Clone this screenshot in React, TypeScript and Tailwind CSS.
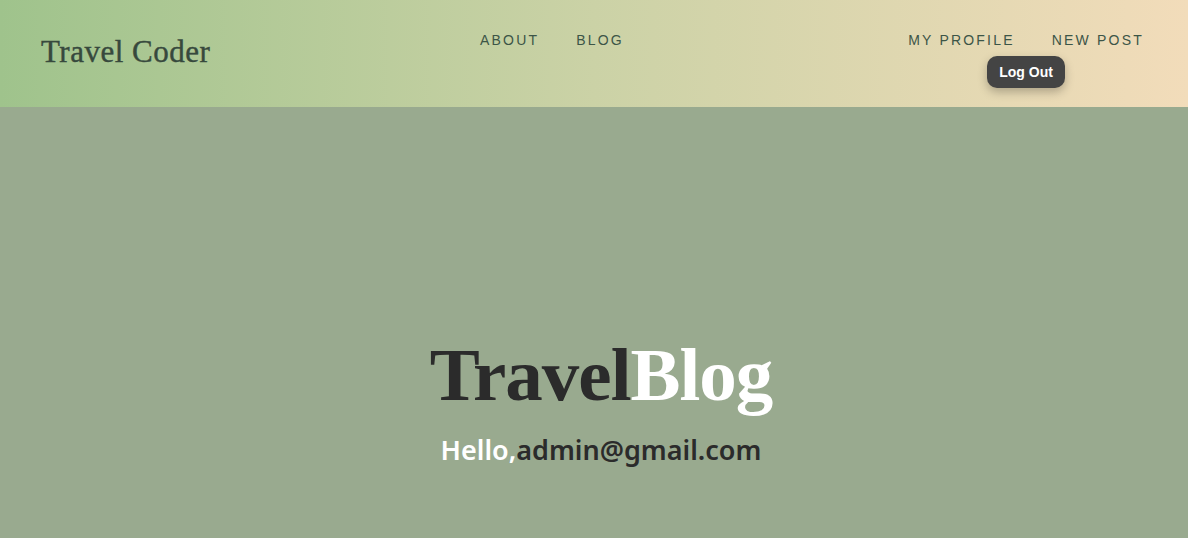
export default function App() {
  return (
    <div
      className="flex min-h-screen flex-col bg-[#99aa8f]"
      style={{ fontFamily: '"Liberation Sans", Arial, sans-serif' }}
    >
      <header className="flex h-[107px] items-start bg-gradient-to-r from-[#9fc38c] via-[#cbd2a6] to-[#f2dcba] pl-[41px] pr-[44px]">
        <h1
          className="mt-[36px] w-[439px] text-[31px] leading-none tracking-[0.5px] text-[#37493d]"
          style={{ fontFamily: '"Liberation Serif", "Times New Roman", serif', WebkitTextStroke: '0.4px #37493d' }}
        >
          Travel Coder
        </h1>
        <nav className="mt-[33px] flex gap-[37px] text-[14px] leading-none tracking-[2.2px] text-[#3c5547]">
          <a href="#">ABOUT</a>
          <a href="#">BLOG</a>
        </nav>
        <div className="ml-auto mt-[33px] flex flex-col items-center">
          <nav className="flex gap-[37px] text-[14px] leading-none tracking-[2.2px] text-[#3c5547]">
            <a href="#">MY PROFILE</a>
            <a href="#">NEW POST</a>
          </nav>
          <button className="mt-[9px] h-[32px] rounded-[10px] bg-[#444444] px-[12px] text-[14px] font-bold text-white shadow-[0_4px_10px_rgba(0,0,0,0.25)]">
            Log Out
          </button>
        </div>
      </header>
      <main className="flex flex-1 flex-col items-center pl-[14px] pt-[230px]">
        <h2
          className="text-[75px] font-bold leading-none tracking-[-1px]"
          style={{ fontFamily: '"Liberation Serif", "Times New Roman", serif' }}
        >
          <span className="text-[#2b2b2b]">Travel</span>
          <span className="text-white">Blog</span>
        </h2>
        <p
          className="mt-[24px] text-[27px] font-semibold leading-none"
          style={{ fontFamily: '"Noto Sans", sans-serif' }}
        >
          <span className="text-white">Hello,</span>
          <span className="text-[#2b2b2b]">admin@gmail.com</span>
        </p>
      </main>
    </div>
  );
}
